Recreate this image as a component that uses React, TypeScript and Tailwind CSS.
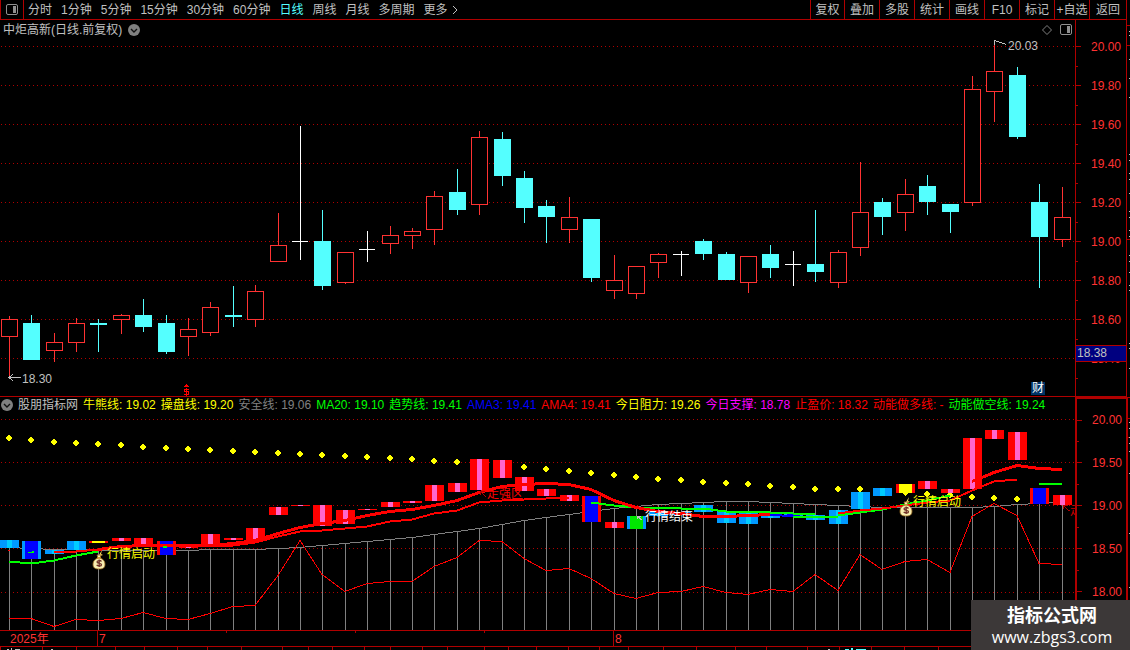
import React from "react";

const PLOT_WIDTH = 1075;
const PRICE_TOP = 40;
const PRICE_HEIGHT = 356;
const STUDY_TOP = 413;
const STUDY_HEIGHT = 217;

const periods = [
  "分时",
  "1分钟",
  "5分钟",
  "15分钟",
  "30分钟",
  "60分钟",
  "日线",
  "周线",
  "月线",
  "多周期",
];

const tools = [
  { label: "复权", width: "w-[34px]" },
  { label: "叠加", width: "w-[35px]" },
  { label: "多股", width: "w-[35px]" },
  { label: "统计", width: "w-[35px]" },
  { label: "画线", width: "w-[35px]" },
  { label: "F10", width: "w-[35px]" },
  { label: "标记", width: "w-[35px]" },
  { label: "+自选", width: "w-[35px]" },
  { label: "返回", width: "w-[37px]" },
];

const readings = [
  { name: "牛熊线", value: "19.02", color: "text-[#ffff00]" },
  { name: "操盘线", value: "19.20", color: "text-[#ffff00]" },
  { name: "安全线", value: "19.06", color: "text-[#808080]" },
  { name: "MA20", value: "19.10", color: "text-[#00ff00]" },
  { name: "趋势线", value: "19.41", color: "text-[#00ff00]" },
  { name: "AMA3", value: "19.41", color: "text-[#0000ff]" },
  { name: "AMA4", value: "19.41", color: "text-[#ff0000]" },
  { name: "今日阻力", value: "19.26", color: "text-[#ffff00]" },
  { name: "今日支撑", value: "18.78", color: "text-[#ff00ff]" },
  { name: "止盈价", value: "18.32", color: "text-[#ff0000]" },
  { name: "动能做多线", value: "-", color: "text-[#ff0000]" },
  { name: "动能做空线", value: "19.24", color: "text-[#00ff00]" },
];

const priceLabels = ["20.00", "19.80", "19.60", "19.40", "19.20", "19.00", "18.80", "18.60", "18.40"];
const studyLabels = ["20.00", "19.50", "19.00", "18.50", "18.00"];
const priceGrid = [46, 85, 124, 163, 202, 241, 280, 319, 358];
const studyGrid = [419, 462, 505, 548, 592];

// kind, high, body top, body bottom, low
type Candle = ["up" | "down" | "flat", number, number, number, number];

const candles: Candle[] = [
  ["up", 316, 319, 337, 377],
  ["down", 315, 323, 360, 360],
  ["up", 333, 342, 351, 362],
  ["up", 318, 323, 343, 352],
  ["down", 319, 323, 325, 352],
  ["up", 314, 315, 320, 334],
  ["down", 299, 315, 327, 332],
  ["down", 315, 323, 352, 354],
  ["up", 318, 329, 337, 356],
  ["up", 302, 307, 333, 336],
  ["down", 286, 315, 317, 327],
  ["up", 285, 291, 320, 327],
  ["up", 213, 245, 262, 262],
  ["flat", 126, 241, 242, 260],
  ["down", 210, 241, 286, 290],
  ["up", 252, 252, 283, 284],
  ["flat", 231, 249, 250, 262],
  ["up", 226, 235, 244, 254],
  ["up", 228, 231, 236, 249],
  ["up", 191, 196, 230, 245],
  ["down", 169, 192, 210, 215],
  ["up", 131, 137, 205, 215],
  ["down", 132, 139, 176, 186],
  ["down", 171, 178, 208, 223],
  ["down", 200, 206, 217, 243],
  ["up", 197, 217, 230, 243],
  ["down", 219, 219, 278, 282],
  ["up", 255, 280, 291, 299],
  ["up", 266, 266, 294, 299],
  ["up", 253, 254, 263, 278],
  ["flat", 251, 254, 255, 276],
  ["down", 239, 241, 254, 260],
  ["down", 252, 254, 280, 280],
  ["up", 256, 256, 283, 293],
  ["down", 245, 254, 268, 278],
  ["flat", 251, 264, 265, 286],
  ["down", 210, 264, 272, 282],
  ["up", 250, 252, 283, 288],
  ["up", 162, 212, 248, 256],
  ["down", 198, 202, 217, 235],
  ["up", 179, 194, 213, 231],
  ["down", 175, 186, 202, 215],
  ["down", 204, 204, 212, 233],
  ["up", 76, 89, 203, 206],
  ["up", 41, 71, 92, 122],
  ["down", 67, 75, 137, 139],
  ["down", 184, 202, 237, 288],
  ["up", 187, 217, 240, 247],
];

// r: strong, b: weak, rb / ry: strong turning, bd / bg: weak turning
const barColors: Record<string, { outer: string; inner: string; pad: number }> = {
  r: { outer: "#ff0000", inner: "#ff66cc", pad: 7 },
  b: { outer: "#0099ff", inner: "#00ccff", pad: 7 },
  rb: { outer: "#ff0000", inner: "#0000ff", pad: 3 },
  ry: { outer: "#ff0000", inner: "#ffff00", pad: 3 },
  bd: { outer: "#0099ff", inner: "#0000ff", pad: 3 },
  bg: { outer: "#0099ff", inner: "#00e600", pad: 3 },
};

const bars: [string, number, number][] = [
  ["b", 540, 548],
  ["bd", 541, 559],
  ["b", 550, 554],
  ["b", 541, 550],
  ["ry", 541, 543],
  ["r", 538, 541],
  ["r", 538, 544],
  ["rb", 541, 555],
  ["r", 545, 548],
  ["r", 534, 547],
  ["r", 538, 540],
  ["r", 528, 540],
  ["r", 507, 515],
  ["r", 505, 506],
  ["r", 505, 526],
  ["r", 510, 524],
  ["r", 509, 510],
  ["r", 502, 507],
  ["r", 501, 503],
  ["r", 485, 501],
  ["r", 483, 492],
  ["r", 459, 490],
  ["r", 460, 478],
  ["r", 477, 491],
  ["r", 489, 496],
  ["r", 495, 501],
  ["rb", 496, 522],
  ["r", 522, 528],
  ["bg", 516, 529],
  ["b", 511, 516],
  ["b", 512, 515],
  ["b", 505, 512],
  ["b", 511, 523],
  ["b", 512, 524],
  ["b", 513, 518],
  ["bd", 514, 517],
  ["b", 515, 520],
  ["b", 510, 524],
  ["b", 492, 509],
  ["b", 488, 496],
  ["ry", 484, 493],
  ["r", 481, 489],
  ["r", 489, 493],
  ["r", 438, 489],
  ["r", 430, 439],
  ["r", 432, 460],
  ["rb", 488, 504],
  ["r", 495, 505],
];

const safety = [
  547, 548, 549, 549, 550, 550, 550, 550, 550, 549, 549, 549, 548, 547, 545, 543,
  541, 539, 537, 534, 531, 528, 524, 520, 517, 514, 511, 508, 506, 504, 503, 502,
  501, 501, 502, 503, 504, 505, 506, 507, 507, 507, 507, 507, 506, 504, 503, 501,
];

const takeProfit = [
  618, 618, 626, 619, 620, 618, 612, 618, 619, 613, 606, 605, 575, 540, 574, 591,
  583, 581, 581, 566, 557, 540, 541, 558, 570, 568, 578, 593, 598, 592, 591, 586,
  592, 594, 589, 591, 574, 590, 554, 569, 561, 559, 572, 516, 503, 515, 563, 564,
];

const resistance = [
  438, 440, 442, 443, 444, 445, 447, 448, 449, 450, 451, 452, 453, 454, 455, 456,
  457, 458, 459, 461, 462, 464, 466, 467, 469, 471, 473, 475, 477, 479, 480, 482,
  483, 484, 486, 487, 489, 489, 489, 491, 492, 494, 495, 497, 498, 499,
];

// start index, stroke width, colour, values
const curves: [number, number, string, number[]][] = [
  [0, 2, "#00ff00", [561, 563, 560, 555, 551]],
  [26, 2, "#00ff00", [502, 505, 507, 507, 508, 508, 511, 511, 512, 513, 513]],
  [34, 2, "#0000ff", [514, 516]],
  [35, 2, "#00ff00", [516, 516, 516]],
  [37, 2, "#00ff00", [515, 512, 509, 504, 500, 495]],
  [46, 2, "#00ff00", [483, 484]],
  [2, 2, "#ff0000", [551, 551, 549]],
  [4, 3, "#ff0000", [549, 546, 545, 545, 545, 545, 543, 540, 533, 527, 523, 520, 515, 511, 509, 505, 500, 492, 486, 484, 483, 484, 489, 500, 507]],
  [28, 3, "#ff0000", [507, 511, 513, 516, 516, 515, 514]],
  [9, 2, "#ff0000", [546, 545, 542, 536, 531, 530, 528, 526, 521, 519, 513, 510, 502, 500, 499, 498, 497]],
  [37, 2, "#ff0000", [513, 510, 508, 505, 502, 500, 490, 481, 479]],
  [43, 3, "#ff0000", [481, 472, 465, 468, 469]],
];

const dateSpans = [
  { label: "2025年", span: 97 },
  { label: "7", span: 516 },
  { label: "8", span: 462 },
];
const weekTicks = [226, 355, 484];

const stripTicks = [
  0, 42, 76, 115, 144, 177, 207, 241, 282, 308, 332, 364, 390, 422, 447, 484, 508,
  536, 568, 599, 628, 663, 696, 735, 766, 807, 839, 871, 904, 938,
];
const sideMarks = [
  31, 35, 59, 78, 97, 154, 160, 173, 179, 193, 211, 217, 230, 236, 255, 261, 272,
  285, 290, 343, 348, 368, 422, 428, 437, 443, 451, 473, 533, 587,
];

const xAt = (i: number) => Math.floor(9.25 + i * 22.4);

const pathOf = (values: number[], start = 0) =>
  values.map((y, i) => `${xAt(start + i)},${y + 0.5}`).join(" ");

function PanelIcon() {
  return (
    <svg width="12" height="12" viewBox="0 0 12 12" aria-hidden="true">
      <rect x="0.5" y="0.5" width="11" height="10" rx="1.5" fill="none" stroke="#909090" />
      <rect x="7" y="2" width="3" height="7" fill="#909090" />
    </svg>
  );
}

function ChevronBadge() {
  return (
    <svg width="12" height="12" viewBox="0 0 12 12" aria-hidden="true">
      <circle cx="6" cy="6" r="6" fill="#808080" />
      <path d="M3 5l3 3 3-3" fill="none" stroke="#101010" strokeWidth="1.4" />
    </svg>
  );
}

function MoneyBag() {
  return (
    <svg width="14" height="20" viewBox="0 0 14 20" aria-hidden="true">
      <path d="M5 3l2 2 3-5-1 4 2 1-3 1z" fill="#ffe060" />
      <path d="M5 5h4l-1 3c3 1 5 3 5 6 0 4-2 5-6 5s-6-1-6-5c0-3 2-5 5-6z" fill="#f8eeb0" stroke="#9a6a20" strokeWidth="0.8" />
      <path d="M5 8h4" stroke="#c09020" strokeWidth="1.5" />
      <path d="M9.500 11.500c-1-1.500-4.500-1.200-4.500 0.500s4.500 1 4.500 2.700-3.800 1.700-4.800 0.200M7.200 9.500v7.500" fill="none" stroke="#703028" strokeWidth="1.3" />
    </svg>
  );
}

function Note({ x, y, top, className, children }: any) {
  return (
    <span
      className={`absolute whitespace-nowrap ${className}`}
      style={{ left: `${(x / PLOT_WIDTH) * 100}%`, top: y - top }}
    >
      {children}
    </span>
  );
}

function Grid({ lines }: { lines: number[] }) {
  return (
    <g stroke="#b00000" strokeDasharray="1 3">
      {lines.map((y) => (
        <line key={y} x1="1" x2={PLOT_WIDTH} y1={y + 0.5} y2={y + 0.5} />
      ))}
    </g>
  );
}

function PriceChart() {
  return (
    <div className="relative overflow-hidden">
      <svg
        className="block h-[356px] w-full"
        viewBox={`0 ${PRICE_TOP} ${PLOT_WIDTH} ${PRICE_HEIGHT}`}
        preserveAspectRatio="none"
        shapeRendering="crispEdges"
      >
        <Grid lines={priceGrid} />
        {candles.map(([kind, high, top, bottom, low], i) => {
          const x = xAt(i);
          const color = kind === "up" ? "#ff3232" : kind === "down" ? "#54ffff" : "#ffffff";
          return (
            <g key={i}>
              <rect x={x} y={high} width="1" height={low - high} fill={color} />
              {kind === "up" ? (
                <rect x={x - 7.5} y={top + 0.5} width="16" height={bottom - top - 1} fill="#000" stroke={color} />
              ) : (
                <rect x={x - 8} y={top} width={kind === "flat" ? 16 : 17} height={bottom - top} fill={color} />
              )}
            </g>
          );
        })}
        <g fill="none" stroke="#c0c0c0">
          <path d="M9 377.500h12M13 374.500l-4 3 4 3" />
          <path d="M1006 44.500l-11-4M999 39.500h-5l1 5" />
        </g>
      </svg>
      <Note x={22} y={372} top={PRICE_TOP} className="text-[#c0c0c0]">
        18.30
      </Note>
      <Note x={1008} y={39} top={PRICE_TOP} className="text-[#c0c0c0]">
        20.03
      </Note>
      <Note x={183} y={384} top={PRICE_TOP} className="text-[#ff0000]">
        <svg width="7" height="12" viewBox="0 0 7 12" shapeRendering="crispEdges" aria-hidden="true">
          <path d="M3 0h1v1h1v1h1v1h-5v-1h1v-1h1z" fill="#ff0000" />
          <path d="M6 5.500h-4.500v2h4v3h-5M3.500 4v8" fill="none" stroke="#ff0000" />
        </svg>
      </Note>
      <Note x={1031} y={382} top={PRICE_TOP} className="bg-[#003366] px-px leading-[13px] text-white">
        财
      </Note>
    </div>
  );
}

function StudyChart() {
  return (
    <div className="relative overflow-hidden">
      <svg
        className="block h-[217px] w-full"
        viewBox={`0 ${STUDY_TOP} ${PLOT_WIDTH} ${STUDY_HEIGHT}`}
        preserveAspectRatio="none"
        shapeRendering="crispEdges"
      >
        <Grid lines={studyGrid} />
        {safety.map((y, i) => (
          <rect key={i} x={xAt(i)} y={y} width="1" height={630 - y} fill="#808080" />
        ))}
        <polyline points={pathOf(safety)} fill="none" stroke="#808080" />
        {resistance.map((y, i) => (
          <path
            key={i}
            d={`M${xAt(i) - 1} ${y - 3}h2v1h1v1h1v2h-1v1h-1v1h-2v-1h-1v-1h-1v-2h1v-1h1z`}
            fill="#ffff00"
          />
        ))}
        {bars.map(([kind, top, bottom], i) => {
          const { outer, inner, pad } = barColors[kind];
          return (
            <g key={i}>
              <rect x={xAt(i) - 9} y={top} width="19" height={bottom - top} fill={outer} />
              <rect x={xAt(i) - 9 + pad} y={top} width={19 - pad * 2} height={bottom - top} fill={inner} />
            </g>
          );
        })}
        <path d="M903 493h5l-2 3h-1z" fill="#ffff00" />
        <polyline points={pathOf(takeProfit)} fill="none" stroke="#ff0000" />
        {curves.map(([start, width, color, values], i) => (
          <polyline key={i} points={pathOf(values, start)} fill="none" stroke={color} strokeWidth={width} />
        ))}
        <path d="M28 552h4v-1h2v2h-6zM163 546h4v2h-4z" fill="#00ff00" />
        <path d="M6 551h4v-1h-2v1z" fill="#ff0000" />
        <path d="M480.500 491.500l6 6M480.500 495v-4h4M1063.500 506l6 5M1063.500 509v-4h4" fill="none" stroke="#b00000" />
        <path d="M637.500 516l4 4M637.500 519v-3h3" fill="none" stroke="#c0c0c0" />
      </svg>
      <Note x={92} y={550} top={STUDY_TOP} className="">
        <MoneyBag />
      </Note>
      <Note x={107} y={547} top={STUDY_TOP} className="text-[#ffff00]">
        行情启动
      </Note>
      <Note x={487} y={487} top={STUDY_TOP} className="text-[#ff0000]">
        走强区
      </Note>
      <Note x={645} y={510} top={STUDY_TOP} className="text-white">
        行情结束
      </Note>
      <Note x={899} y={497} top={STUDY_TOP} className="">
        <MoneyBag />
      </Note>
      <Note x={913} y={495} top={STUDY_TOP} className="text-[#ffff00]">
        行情启动
      </Note>
      <Note x={1070} y={504} top={STUDY_TOP} className="text-[#d00000]">
        走
      </Note>
    </div>
  );
}

function AxisRow({ label, height }: { label: string; height: string }) {
  return (
    <li className={`relative flex items-center gap-[10px] text-[#ff3232] ${height}`}>
      <span className="h-px w-[5px] bg-[#b00000]" />
      {label}
      <span className="absolute left-0 top-full h-px w-[2px] bg-[#b00000]" />
    </li>
  );
}

export default function App() {
  return (
    <div className="relative flex min-h-screen overflow-hidden bg-black font-['Liberation_Sans','Noto_Sans_CJK_SC',sans-serif] text-[12px] leading-[14px] text-[#c0c0c0]">
      <div className="flex min-w-0 flex-1 flex-col">
        <header className="flex h-[20px] justify-between border-b border-[#b00000]">
          <nav className="flex items-stretch gap-[9px] whitespace-nowrap">
            <button className="-mr-[5px] flex w-[24px] items-center justify-center border-x border-[#b00000]" aria-label="侧栏">
              <PanelIcon />
            </button>
            {periods.map((period) => (
              <button key={period} className={period === "日线" ? "text-[#54ffff]" : ""}>
                {period}
              </button>
            ))}
            <button className="flex items-center gap-1">
              更多
              <svg width="6" height="10" viewBox="0 0 6 10" aria-hidden="true">
                <path d="M1 1l4 4-4 4" fill="none" stroke="#c0c0c0" />
              </svg>
            </button>
          </nav>
          <div className="flex whitespace-nowrap">
            {tools.map((tool) => (
              <button
                key={tool.label}
                className={`flex shrink-0 items-center justify-center border-l border-[#b00000] ${tool.width}`}
              >
                {tool.label}
              </button>
            ))}
          </div>
        </header>

        <section className="flex border-b border-[#b00000]">
          <div className="min-w-0 flex-1">
            <div className="flex h-[20px] items-center justify-between px-[3px]">
              <h1 className="flex items-center gap-[6px]">
                中炬高新(日线.前复权)
                <button aria-label="展开">
                  <ChevronBadge />
                </button>
              </h1>
              <div className="flex items-center gap-2">
                <button aria-label="标记">
                  <svg width="10" height="10" viewBox="0 0 10 10" aria-hidden="true">
                    <path d="M5 0.500l4.500 4.500-4.500 4.500-4.500-4.500z" fill="none" stroke="#808080" />
                  </svg>
                </button>
                <button aria-label="面板">
                  <PanelIcon />
                </button>
              </div>
            </div>
            <PriceChart />
          </div>
          <div className="relative w-[51px] border-l border-[#b00000] pt-[7px]">
            <ul>
              {priceLabels.map((label) => (
                <AxisRow key={label} label={label} height="h-[39px]" />
              ))}
            </ul>
            <div className="absolute inset-x-0 bottom-[34px] h-[17px] border-y border-[#b00000] bg-[#000080] pl-px">
              18.38
            </div>
          </div>
        </section>

        <section className="flex border-b border-[#b00000]">
          <div className="min-w-0 flex-1">
            <div className="flex h-[16px] items-center gap-[5px] whitespace-nowrap pl-px">
              <button aria-label="指标菜单">
                <ChevronBadge />
              </button>
              <span>股朋指标网</span>
              {readings.map((item) => (
                <span key={item.name} className={item.color}>
                  {item.name}: {item.value}
                </span>
              ))}
            </div>
            <StudyChart />
          </div>
          <ul className="w-[51px] border-l-2 border-t-2 border-[#b00000]">
            {studyLabels.map((label, i) => (
              <AxisRow key={label} label={label} height={i === 0 ? "h-[42px]" : "h-[43px]"} />
            ))}
          </ul>
        </section>

        <footer className="border-b border-[#b00000] pr-[51px]">
          <div className="relative flex h-[15px] text-[#ff3232]">
            {dateSpans.map((item, i) => (
              <div
                key={item.label}
                className="flex min-w-0 basis-0"
                style={{ flexGrow: item.span }}
              >
                <span className={i === 0 ? "pl-[10px] leading-[16px]" : "border-l border-[#b00000] pl-px leading-[16px]"}>
                  {item.label}
                </span>
              </div>
            ))}
            {weekTicks.map((x) => (
              <span
                key={x}
                className="absolute top-0 h-[2px] w-px bg-[#b00000]"
                style={{ left: `${(x / PLOT_WIDTH) * 100}%` }}
              />
            ))}
          </div>
        </footer>
        <svg className="block h-[3px] w-full" viewBox="0 0 1126 3" preserveAspectRatio="none" shapeRendering="crispEdges">
          {stripTicks.map((x) => (
            <rect key={x} x={x} y="0" width="1" height="3" fill="#b00000" />
          ))}
          <path d="M7 2h2v1h-2zM11 1h1v2h-1zM15 2h5v1h-5zM51 2h2v1h-2zM828 2h2v1h-2z" fill="#c0c0c0" />
          <path d="M845 2h4v1h-4zM851 1h2v2h-2zM856 2h10v1h-10z" fill="#54ffff" />
        </svg>
      </div>

      <aside className="w-[4px] shrink-0 border-l border-[#b00000]">
        <svg className="block h-[650px] w-[3px]" viewBox="0 0 3 650" shapeRendering="crispEdges">
          <rect x="0" y="397" width="1" height="253" fill="#b00000" />
          {[25, 45, 239, 397, 418, 437].map((y) => (
            <rect key={y} x="0" y={y} width="3" height="1" fill="#b00000" />
          ))}
          {sideMarks.map((y) => (
            <rect key={y} x="2" y={y} width="1" height="1" fill="#c0c0c0" />
          ))}
        </svg>
      </aside>

      <div className="absolute bottom-0 right-0 flex h-[50px] w-[159px] flex-col items-center justify-center bg-[#3c3838] pl-[3px] pt-[2px] text-white">
        <strong className="text-[18px] leading-[22px]">指标公式网</strong>
        <a href="#" className="font-['Open_Sans','Noto_Sans',sans-serif] text-[16px] leading-[20px]">
          www.zbgs3.com
        </a>
      </div>
    </div>
  );
}
